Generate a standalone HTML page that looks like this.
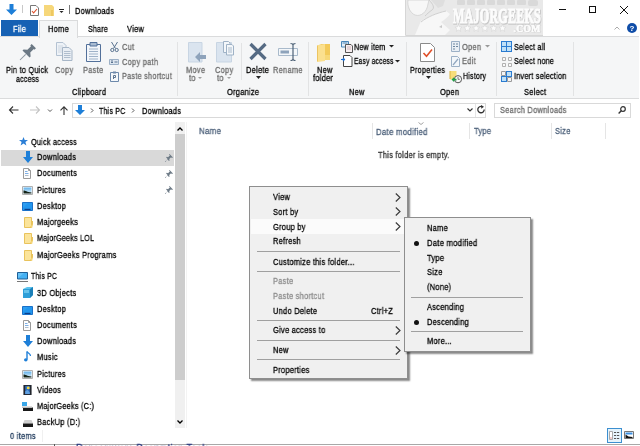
<!DOCTYPE html>
<html><head><meta charset="utf-8">
<style>
*{margin:0;padding:0;box-sizing:border-box}
html,body{width:640px;height:446px;overflow:hidden;background:#fff}
body{position:relative;font-family:"Liberation Sans",sans-serif;font-size:9px;color:#000;letter-spacing:0.3px;-webkit-text-stroke:0.3px currentColor}
.a{transform:scaleX(0.83);transform-origin:0 0;will-change:transform}
.a{position:absolute;white-space:nowrap;line-height:10px}
svg{position:absolute;overflow:visible}
.g{color:#6d6d6d}
.hl{position:absolute}
</style></head><body>

<!-- ===== TITLE BAR ===== -->
<svg style="left:6px;top:4px" width="11" height="11" viewBox="0 0 11 11"><path d="M3.5 0h4v5.5h3.5L5.5 11 0 5.5h3.5z" fill="#1e7fd8"/></svg>
<div class="hl" style="left:22px;top:5px;width:1px;height:8px;background:#c8c8c8"></div>
<svg style="left:30px;top:5px" width="9" height="11" viewBox="0 0 9 11"><path d="M0.5 0.5h5.5l2.5 2.5v7.5h-8z" fill="#fff" stroke="#777" stroke-width="1"/><path d="M2 6l1.6 1.8L7 4" fill="none" stroke="#e0502a" stroke-width="1.1"/></svg>
<svg style="left:44px;top:5px" width="10" height="11" viewBox="0 0 10 11"><path d="M0 0h8l2 2v9H0z" fill="#f6d77a"/><path d="M8 5v6" stroke="#e5b94a"/></svg>
<svg style="left:59px;top:9px" width="5" height="4" viewBox="0 0 5 4"><path d="M0 0.5h5" stroke="#222"/><path d="M0.5 2h4l-2 2z" fill="#222"/></svg>
<div class="hl" style="left:69px;top:5px;width:1px;height:9px;background:#777"></div>
<div class="a" style="left:75px;top:6px">Downloads</div>

<!-- watermark -->
<svg style="left:405px;top:0px;will-change:transform" width="139" height="36" viewBox="0 0 139 36">
<rect x="0" y="0" width="138" height="35" fill="#e9e9e9"/>
<path d="M0.5 0V35.5H138" fill="none" stroke="#d6d6d6"/>
<g fill="#d9d9d9"><rect x="52" y="0" width="8" height="5" rx="1"/><rect x="62" y="0" width="8" height="5" rx="1"/><rect x="72" y="0" width="8" height="5" rx="1"/><rect x="82" y="0" width="8" height="5" rx="1"/><rect x="92" y="0" width="8" height="5" rx="1"/><rect x="102" y="0" width="8" height="5" rx="1"/><rect x="112" y="0" width="9" height="5" rx="1"/><rect x="123" y="0" width="10" height="6" rx="2"/></g>
<path d="M3 0C2 6 5 13 10 15C16 17 22 12 23 4L24 0Z" fill="#f7f7f7" stroke="#d0d0d0" stroke-width="0.8"/>
<path d="M24 0C28 4 30 8 27 10C24 12 22 14 20 16" fill="none" stroke="#cfcfcf" stroke-width="1"/>
<path d="M16 21C22 17 32 13 41 11L45 14C42 18 39 20 36 22L45 30L40 35H10Z" fill="#f7f7f7"/>
<path d="M16 22C22 17 32 13 41 11" fill="none" stroke="#d0d0d0" stroke-width="1"/>
<path d="M26 0L33 8L38 6L40 0Z" fill="#dedede"/>
<path d="M34 27l3 -2v3z" fill="#c8c8c8"/>
<text x="48.6" y="24" font-family="Liberation Serif" font-weight="bold" font-size="22" textLength="88" lengthAdjust="spacingAndGlyphs" fill="#c9c9c9" stroke="#c9c9c9" stroke-width="1.6">MAJORGEEKS</text>
<text x="48" y="23.4" font-family="Liberation Serif" font-weight="bold" font-size="22" textLength="88" lengthAdjust="spacingAndGlyphs" fill="#fcfcfc" stroke="#fcfcfc" stroke-width="1.1">MAJORGEEKS</text>
<g fill="#fbfbfb" stroke="#d0d0d0" stroke-width="0.5">
<polygon points="53.50,24.50 54.51,26.92 57.11,27.13 55.13,28.83 55.73,31.37 53.50,30.01 51.27,31.37 51.87,28.83 49.89,27.13 52.49,26.92"/><polygon points="62.30,24.50 63.31,26.92 65.91,27.13 63.93,28.83 64.53,31.37 62.30,30.01 60.07,31.37 60.67,28.83 58.69,27.13 61.29,26.92"/><polygon points="71.10,24.50 72.11,26.92 74.71,27.13 72.73,28.83 73.33,31.37 71.10,30.01 68.87,31.37 69.47,28.83 67.49,27.13 70.09,26.92"/><polygon points="79.90,24.50 80.91,26.92 83.51,27.13 81.53,28.83 82.13,31.37 79.90,30.01 77.67,31.37 78.27,28.83 76.29,27.13 78.89,26.92"/><polygon points="88.70,24.50 89.71,26.92 92.31,27.13 90.33,28.83 90.93,31.37 88.70,30.01 86.47,31.37 87.07,28.83 85.09,27.13 87.69,26.92"/><polygon points="97.50,24.50 98.51,26.92 101.11,27.13 99.13,28.83 99.73,31.37 97.50,30.01 95.27,31.37 95.87,28.83 93.89,27.13 96.49,26.92"/></g>
<text x="109" y="32.4" font-family="Liberation Serif" font-weight="bold" font-size="11" textLength="27" lengthAdjust="spacingAndGlyphs" fill="#c9c9c9" stroke="#c9c9c9" stroke-width="1.2">.COM</text>
<text x="108.6" y="32" font-family="Liberation Serif" font-weight="bold" font-size="11" textLength="27" lengthAdjust="spacingAndGlyphs" fill="#fcfcfc" stroke="#fcfcfc" stroke-width="0.7">.COM</text>
</svg>

<!-- window controls -->
<div class="hl" style="left:559px;top:9px;width:7px;height:1px;background:#111"></div>
<div class="hl" style="left:589px;top:6px;width:7px;height:7px;border:1px solid #111"></div>
<svg style="left:620px;top:6px" width="8" height="8" viewBox="0 0 8 8"><path d="M0 0L8 8M8 0L0 8" stroke="#111" stroke-width="1"/></svg>

<!-- ===== TABS ===== -->
<div class="hl" style="left:1px;top:20px;width:37px;height:16px;background:#1661b4"></div>
<div class="a" style="left:13px;top:24px;color:#fff">File</div>
<div class="hl" style="left:39px;top:20px;width:39px;height:17px;background:#f5f6f7;border:1px solid #dadbdc;border-bottom:none"></div>
<div class="a" style="left:48px;top:24px">Home</div>
<div class="a" style="left:88px;top:24px;transform:scaleX(0.78)">Share</div>
<div class="a" style="left:127px;top:24px">View</div>
<svg style="left:614px;top:26px" width="6" height="4" viewBox="0 0 6 4"><path d="M0.5 3.5L3 1l2.5 2.5" fill="none" stroke="#aaa" stroke-width="1"/></svg>
<svg style="left:627px;top:23px;will-change:transform" width="10" height="10" viewBox="0 0 10 10"><circle cx="5" cy="5" r="5" fill="#0f4da8"/><text x="5" y="8" font-size="8" font-weight="bold" fill="#fff" text-anchor="middle" font-family="Liberation Sans">?</text></svg>

<!-- ===== RIBBON ===== -->
<div class="hl" style="left:0;top:36px;width:639px;height:63px;background:#f5f6f7;border-top:1px solid #dadbdc;border-bottom:1px solid #dadbdc"></div>
<div class="hl" style="left:39px;top:36px;width:39px;height:2px;background:#f5f6f7;border-left:1px solid #dadbdc;border-right:1px solid #dadbdc"></div>


<!-- Clipboard group -->
<svg style="left:19px;top:45px" width="16" height="16" viewBox="0 0 16 16"><g transform="translate(9.5 6.5) rotate(45)"><path d="M-3 -7.5h6v2h-1v5l3 2.5v1.5h-10v-1.5l3-2.5v-5h-1z" fill="#6b7884"/><path d="M-0.5 4h1v8h-1z" fill="#8a949e"/></g></svg>
<div class="a" style="left:6px;top:65px;transform:scaleX(0.811)">Pin to Quick</div>
<div class="a" style="left:16px;top:74px;transform:scaleX(0.775)">access</div>
<svg style="left:56px;top:42px" width="17" height="19" viewBox="0 0 17 19"><path d="M0.5 0.5h6.5l3 3v10h-9.5z" fill="#eef2f7" stroke="#b4c2d2"/><path d="M2 4h5M2 6h6M2 8h6M2 10h6" stroke="#c5d0dc" stroke-width="0.8"/><path d="M6.5 5.5h6.5l3 3v10h-9.5z" fill="#e9eef4" stroke="#a7b6c7"/><path d="M8 9.5h6.5M8 11.5h6.5M8 13.5h6.5M8 15.5h6.5" stroke="#a9b8c9" stroke-width="0.9"/></svg>
<div class="a g" style="left:55px;top:65px">Copy</div>
<svg style="left:86px;top:42px" width="15" height="20" viewBox="0 0 15 20"><path d="M0.5 2.5h14v17h-14z" fill="#f3f6fa" stroke="#52709a"/><path d="M4 0.5h7v3.5H4z" fill="#a9bcd2" stroke="#52709a"/><path d="M3 7h9M3 9.5h9M3 12h9M3 14.5h9M3 17h9" stroke="#9fb2c8"/></svg>
<div class="a g" style="left:83px;top:65px">Paste</div>
<svg style="left:110px;top:42px" width="9" height="10" viewBox="0 0 9 10"><path d="M1.5 0L5.5 6.5M7.5 0L3.5 6.5" stroke="#5a7390" stroke-width="1"/><circle cx="2.3" cy="8" r="1.6" fill="none" stroke="#5a7390"/><circle cx="6.7" cy="8" r="1.6" fill="none" stroke="#5a7390"/></svg>
<div class="a g" style="left:122px;top:42px">Cut</div>
<svg style="left:109px;top:59px" width="10" height="6" viewBox="0 0 10 6"><path d="M0.5 0.5h9v5h-9z" fill="#dde6f0" stroke="#9cb0c6"/><path d="M2 2h2M2 3.5h2M5.5 3h3" stroke="#5a7390"/></svg>
<div class="a g" style="left:122px;top:57px">Copy path</div>
<svg style="left:110px;top:71px" width="9" height="11" viewBox="0 0 9 11"><path d="M0.5 1.5h8v9h-8z" fill="#f5f8fb" stroke="#6d89ab"/><path d="M3 0.5h3v2h-3z" fill="#6d89ab"/><path d="M3.5 8V4.5h2v2h-2" fill="none" stroke="#5a7390"/></svg>
<div class="a g" style="left:122px;top:71px;transform:scaleX(0.81)">Paste shortcut</div>
<div class="a" style="left:72px;top:87px">Clipboard</div>
<div class="hl" style="left:177px;top:42px;width:1px;height:54px;background:#e2e3e4"></div>

<!-- Organize group -->
<svg style="left:188px;top:42px" width="19" height="21" viewBox="0 0 19 21"><path d="M0.5 0.5h13.5v19.5H0.5z" fill="#dae4ef" stroke="#c8d5e3"/><path d="M7 15l5-5v3h6v4h-6v3z" fill="#8ea3bb"/></svg>
<div class="a g" style="left:186px;top:65px">Move</div>
<div class="a g" style="left:189px;top:73px">to</div><svg style="left:198px;top:77px" width="4" height="2" viewBox="0 0 4 2"><path d="M0 0h4L2 2z" fill="#a0a0a0"/></svg>
<svg style="left:216px;top:40px" width="19" height="23" viewBox="0 0 19 23"><path d="M0.5 2.5h15v19.5H0.5z" fill="#dae4ef" stroke="#c8d5e3"/><path d="M7.5 1.5h5l1.5 1.5v9.5h-6.5z" fill="#f4f7fa" stroke="#9fb2c6"/><path d="M10.5 4.5h5.5l1.5 1.5v9h-7z" fill="#f4f7fa" stroke="#9fb2c6"/><path d="M12 8h4M12 10h4M12 12h4" stroke="#a9bacb"/></svg>
<div class="a g" style="left:215px;top:65px">Copy</div>
<div class="a g" style="left:217px;top:73px">to</div><svg style="left:227px;top:77px" width="4" height="2" viewBox="0 0 4 2"><path d="M0 0h4L2 2z" fill="#a0a0a0"/></svg>
<div class="hl" style="left:241px;top:43px;width:1px;height:37px;background:#e2e3e4"></div>
<svg style="left:249px;top:43px" width="18" height="17" viewBox="0 0 18 17"><path d="M1.5 1L16.5 16M16.5 1L1.5 16" stroke="#566b84" stroke-width="3.2"/></svg>
<div class="a" style="left:246px;top:65px">Delete</div>
<svg style="left:256px;top:76px" width="5" height="3" viewBox="0 0 5 3"><path d="M0 0h5L2.5 3z" fill="#222"/></svg>
<svg style="left:278px;top:43px" width="21" height="19" viewBox="0 0 21 19"><path d="M0.5 5.5h19v7h-19z" fill="#f4f7fa" stroke="#a9bacb"/><path d="M2.5 7.5h8.5v3H2.5z" fill="#8ea3bb"/><path d="M12.5 0.5c1.5 0 2.5 .5 2.5 1.5 0-1 1-1.5 2.5-1.5M12.5 17.5c1.5 0 2.5-.5 2.5-1.5 0 1 1 1.5 2.5 1.5M15 2v14" fill="none" stroke="#4f6378" stroke-width="1.2"/></svg>
<div class="a g" style="left:273px;top:65px">Rename</div>
<div class="a" style="left:227px;top:87px">Organize</div>
<div class="hl" style="left:308px;top:42px;width:1px;height:54px;background:#e2e3e4"></div>

<!-- New group -->
<svg style="left:317px;top:43px" width="14" height="19" viewBox="0 0 14 19"><path d="M4 1h9v16H4z" fill="#f3ca5a"/><path d="M0.5 2.5L4 1v16l-3.5 1.5z" fill="#f7d878"/><path d="M0.5 2.5l7.5-1.5v17l-7.5 1z" fill="#fbe08f"/><path d="M8 12h5v5H8z" fill="#f7d878"/><path d="M0.5 2.5v16" stroke="#e8bd50" stroke-width="0.8"/></svg>
<div class="a" style="left:317px;top:65px">New</div>
<div class="a" style="left:313px;top:73px">folder</div>
<svg style="left:341px;top:41px" width="12" height="12" viewBox="0 0 12 12"><path d="M0.5 0.5h7v5.5h-7z" fill="#e3eef8" stroke="#4a86b8"/><path d="M1.5 1.5h5v1h-5z" fill="#4a86b8"/><path d="M4.5 3.5h5.5l1.5 1.5v6.5h-7z" fill="#f7eef0" stroke="#555"/><path d="M6 6h4M6 8h4" stroke="#c9a9b0" stroke-width="0.8"/></svg>
<div class="a" style="left:354px;top:42px;transform:scaleX(0.79)">New item</div><svg style="left:389px;top:45px" width="5" height="3" viewBox="0 0 5 3"><path d="M0 0h5L2.5 2.5z" fill="#222"/></svg>
<svg style="left:341px;top:55px" width="12" height="12" viewBox="0 0 12 12"><path d="M2.5 0.5h6.5l2 2v9h-8.5z" fill="#fff" stroke="#444"/><path d="M0 4.5h3.5M2 3l1.5 1.5L2 6" fill="none" stroke="#1e6fd0" stroke-width="1.1"/></svg>
<div class="a" style="left:354px;top:56px;transform:scaleX(0.735)">Easy access</div><svg style="left:395px;top:60px" width="5" height="3" viewBox="0 0 5 3"><path d="M0 0h5L2.5 2.5z" fill="#222"/></svg>
<div class="a" style="left:349px;top:87px">New</div>
<div class="hl" style="left:406px;top:42px;width:1px;height:54px;background:#e2e3e4"></div>

<!-- Open group -->
<svg style="left:420px;top:43px" width="15" height="19" viewBox="0 0 15 19"><path d="M0.5 0.5h10l4 4v14h-14z" fill="#fff" stroke="#8a8a8a"/><path d="M3.5 10l3 3.2L12 6.5" fill="none" stroke="#e0502a" stroke-width="1.6"/></svg>
<div class="a" style="left:410px;top:65px;transform:scaleX(0.8)">Properties</div>
<svg style="left:426px;top:76px" width="5" height="3" viewBox="0 0 5 3"><path d="M0 0h5L2.5 3z" fill="#222"/></svg>
<svg style="left:451px;top:41px" width="9" height="11" viewBox="0 0 9 11"><path d="M0.5 0.5h8v10h-8z" fill="#e8eef5" stroke="#9cb0c6"/><path d="M2 3h2M2 5.5h2M2 8h2M5 3h2M5 5.5h2" stroke="#6f879f"/></svg>
<div class="a g" style="left:462px;top:42px">Open</div><svg style="left:485px;top:45px" width="5" height="3" viewBox="0 0 5 3"><path d="M0 0h5L2.5 2.5z" fill="#999"/></svg>
<svg style="left:451px;top:56px" width="9" height="11" viewBox="0 0 9 11"><path d="M0.5 0.5h6l2 2v8h-8z" fill="#f2f6fa" stroke="#9cb0c6"/><path d="M2 9l5-6" stroke="#8fa6bf" stroke-width="1.2"/></svg>
<div class="a g" style="left:462px;top:56px">Edit</div>
<svg style="left:450px;top:71px" width="13" height="13" viewBox="0 0 13 13"><path d="M0 0h6.5v8.5H0z" fill="#f7dd7a"/><path d="M0 0v8" stroke="#d9b440"/><circle cx="8" cy="8.2" r="3.6" fill="#fafafa" stroke="#555" stroke-width="1"/><path d="M8 6v2.3h1.8" fill="none" stroke="#555" stroke-width="0.8"/><path d="M1.5 8.5l2.5-2.3v1.5h2.5v1.8H4v1.5z" fill="#22a04a"/></svg>
<div class="a" style="left:463px;top:71px;transform:scaleX(0.773)">History</div>
<div class="a" style="left:440px;top:87px">Open</div>
<div class="hl" style="left:496px;top:42px;width:1px;height:54px;background:#e2e3e4"></div>

<!-- Select group -->
<svg style="left:501px;top:41px" width="11" height="11" viewBox="0 0 11 11"><path d="M0 0h11v11H0z" fill="#2a7bd0"/><path d="M1 1h4v4H1zM6 1h4v4H6zM1 6h4v4H1zM6 6h4v4H6z" fill="#bfe0f7"/></svg>
<div class="a" style="left:514px;top:42px;transform:scaleX(0.79)">Select all</div>
<svg style="left:502px;top:57px" width="10" height="10" viewBox="0 0 10 10"><path d="M0.5 0.5h3v3h-3zM6.5 0.5h3v3h-3zM0.5 6.5h3v3h-3zM6.5 6.5h3v3h-3z" fill="#fafafa" stroke="#a8a8a8" stroke-width="0.9"/></svg>
<div class="a" style="left:514px;top:56px;transform:scaleX(0.787)">Select none</div>
<svg style="left:501px;top:71px" width="11" height="11" viewBox="0 0 11 11"><path d="M0.5 0.5h4v4h-4zM6.5 6.5h4v4h-4z" fill="none" stroke="#9a9a9a"/><path d="M5 0h6v6H5zM0 5h6v6H0z" fill="#2a7bd0"/><path d="M6 1h4v4H6zM1 6h4v4H1z" fill="#bfe0f7"/></svg>
<div class="a" style="left:514px;top:71px;transform:scaleX(0.804)">Invert selection</div>
<div class="a" style="left:524px;top:87px">Select</div>
<div class="hl" style="left:573px;top:42px;width:1px;height:54px;background:#e2e3e4"></div>


<!-- ===== ADDRESS BAR ===== -->
<svg style="left:9px;top:106px" width="10" height="8" viewBox="0 0 10 8"><path d="M0.5 4h9M4 0.5L0.5 4 4 7.5" fill="none" stroke="#333" stroke-width="1.1"/></svg>
<svg style="left:30px;top:106px" width="10" height="8" viewBox="0 0 10 8"><path d="M0 4h9.5M6 0.5L9.5 4 6 7.5" fill="none" stroke="#c4c4c4" stroke-width="1.1"/></svg>
<svg style="left:48px;top:109px" width="4" height="3" viewBox="0 0 4 3"><path d="M0 0.5l2 2 2-2" fill="none" stroke="#555" stroke-width="1"/></svg>
<svg style="left:60px;top:106px" width="8" height="9" viewBox="0 0 8 9"><path d="M4 9V0.8M0.5 4.3L4 0.8l3.5 3.5" fill="none" stroke="#333" stroke-width="1.1"/></svg>
<div class="hl" style="left:72px;top:103px;width:414px;height:15px;border:1px solid #d9d9d9;background:#fff"></div>
<svg style="left:75px;top:105px" width="10" height="10" viewBox="0 0 10 10"><path d="M3 0h4v5h3L5 10 0 5h3z" fill="#1e7fd8"/></svg>
<svg style="left:90px;top:108px" width="4" height="5" viewBox="0 0 4 5"><path d="M1 0.5l2 2-2 2" fill="none" stroke="#555" stroke-width="1"/></svg>
<div class="a" style="left:99px;top:106px;transform:scaleX(0.777)">This PC</div>
<svg style="left:131px;top:108px" width="4" height="5" viewBox="0 0 4 5"><path d="M1 0.5l2 2-2 2" fill="none" stroke="#555" stroke-width="1"/></svg>
<div class="a" style="left:142px;top:106px">Downloads</div>
<svg style="left:467px;top:108px" width="6" height="4" viewBox="0 0 6 4"><path d="M0.5 0.5L3 3l2.5-2.5" fill="none" stroke="#333" stroke-width="1.1"/></svg>
<div class="hl" style="left:475px;top:104px;width:1px;height:13px;background:#e5e5e5"></div>
<svg style="left:477px;top:105px" width="9" height="10" viewBox="0 0 9 10"><path d="M7.2 4.5A3.2 3.2 0 1 1 5.2 1.6" fill="none" stroke="#333" stroke-width="1.3"/><path d="M4 0l3 1.8L4.3 3.8z" fill="#333"/></svg>
<div class="hl" style="left:494px;top:103px;width:137px;height:15px;border:1px solid #d9d9d9;background:#fff"></div>
<div class="a" style="left:500px;top:105px;color:#6d6d6d">Search Downloads</div>
<svg style="left:618px;top:106px" width="8" height="8" viewBox="0 0 8 8"><circle cx="5" cy="3" r="2.3" fill="none" stroke="#333" stroke-width="1.2"/><path d="M3.3 4.7L0.6 7.4" stroke="#333" stroke-width="1.4"/></svg>

<!-- ===== NAV PANE ===== -->
<svg style="left:19px;top:137px" width="9" height="9" viewBox="0 0 9 9"><path d="M4.5 0l1.2 3h3.3L6.4 5l1 3.5-2.9-2-2.9 2 1-3.5L0 3h3.3z" fill="#2b7fd6"/></svg>
<div class="a" style="left:31px;top:137px;transform:scaleX(0.805)">Quick access</div>
<div class="hl" style="left:1px;top:150px;width:173px;height:16px;background:#d9d9d9"></div>
<svg style="left:23px;top:151px" width="10" height="12" viewBox="0 0 10 12"><path d="M3 0h4v6h3l-5 6-5-6h3z" fill="#1e7fd8"/></svg>
<div class="a" style="left:37px;top:152px">Downloads</div>
<svg style="left:23px;top:168px" width="8" height="11" viewBox="0 0 8 11"><path d="M0.5 0.5h5l2 2v8h-7z" fill="#fdfdfd" stroke="#9a9a9a"/><path d="M5.5 0.5v2h2" fill="none" stroke="#9a9a9a"/><path d="M2 3.5h2.5M2 5.5h3.5" stroke="#5b9be0" stroke-width="0.8"/><path d="M2 7.5h3.5" stroke="#9ab" stroke-width="0.8"/></svg>
<div class="a" style="left:37px;top:168px">Documents</div>
<svg style="left:22px;top:186px" width="11" height="9" viewBox="0 0 11 9"><defs><linearGradient id="sky" x1="0" y1="0" x2="0" y2="1"><stop offset="0" stop-color="#5fb0ea"/><stop offset="1" stop-color="#e6f3fb"/></linearGradient></defs><path d="M0.5 0.5h10v8h-10z" fill="#fff" stroke="#b0b0b0"/><path d="M1.5 1.5h8v6h-8z" fill="url(#sky)"/><path d="M1.5 4.5c2 0 3.5 1.5 8 2v1h-8z" fill="#142418"/></svg>
<div class="a" style="left:37px;top:185px">Pictures</div>
<svg style="left:22px;top:202px" width="11" height="9" viewBox="0 0 11 9"><path d="M0.5 0.5h10v8h-10z" fill="#2196ee" stroke="#1a70c8"/><path d="M1 1h5l-5 5z" fill="#3aa6f4" opacity="0.5"/><path d="M2.5 6.8h6v1.2h-6z" fill="#0b3f8a"/></svg>
<div class="a" style="left:37px;top:201px">Desktop</div>

<div class="hl" style="left:166px;top:155px;width:7px;height:7px"></div>
<svg style="left:24px;top:217px" width="9" height="11" viewBox="0 0 9 11"><path d="M0.5 0.5h7v10h-7z" fill="#fbe49b" stroke="#e9c35c"/><path d="M6 10.5l2.5-2.5V4" fill="none" stroke="#e9c35c"/><path d="M7 8.5l1.5-1.5v3.5H7z" fill="#f6d77a"/></svg><div class="a" style="left:37px;top:217px">Majorgeeks</div>
<svg style="left:24px;top:233px" width="9" height="11" viewBox="0 0 9 11"><path d="M0.5 0.5h7v10h-7z" fill="#fbe49b" stroke="#e9c35c"/><path d="M6 10.5l2.5-2.5V4" fill="none" stroke="#e9c35c"/><path d="M7 8.5l1.5-1.5v3.5H7z" fill="#f6d77a"/></svg><div class="a" style="left:37px;top:233px;transform:scaleX(0.793)">MajorGeeks LOL</div>
<svg style="left:24px;top:250px" width="9" height="11" viewBox="0 0 9 11"><path d="M0.5 0.5h7v10h-7z" fill="#fbe49b" stroke="#e9c35c"/><path d="M6 10.5l2.5-2.5V4" fill="none" stroke="#e9c35c"/><path d="M7 8.5l1.5-1.5v3.5H7z" fill="#f6d77a"/></svg><div class="a" style="left:37px;top:250px">MajorGeeks Programs</div>
<svg style="left:165px;top:154px" width="8" height="8" viewBox="0 0 7 7"><path d="M4 0l3 3-1 .5-.7-.7-1.6 1.6.3 1.2-.5.5-1.5-1.5L.5 7 0 6.5l2.5-2L1 3l.5-.5 1.2.3 1.6-1.6L3.5.5z" fill="#6d7a86"/></svg><svg style="left:165px;top:170px" width="8" height="8" viewBox="0 0 7 7"><path d="M4 0l3 3-1 .5-.7-.7-1.6 1.6.3 1.2-.5.5-1.5-1.5L.5 7 0 6.5l2.5-2L1 3l.5-.5 1.2.3 1.6-1.6L3.5.5z" fill="#6d7a86"/></svg><svg style="left:165px;top:186px" width="8" height="8" viewBox="0 0 7 7"><path d="M4 0l3 3-1 .5-.7-.7-1.6 1.6.3 1.2-.5.5-1.5-1.5L.5 7 0 6.5l2.5-2L1 3l.5-.5 1.2.3 1.6-1.6L3.5.5z" fill="#6d7a86"/></svg>
<svg style="left:17px;top:272px" width="11" height="10" viewBox="0 0 11 10"><path d="M0.5 0.5h10v6.5h-10z" fill="#45b0f2" stroke="#1f5f96"/><path d="M1 1h6l-6 5z" fill="#7fcdf8" opacity="0.6"/><path d="M0 9.5h11" stroke="#777" stroke-width="1"/></svg>
<div class="a" style="left:31px;top:271px;transform:scaleX(0.768)">This PC</div>
<svg style="left:23px;top:287px" width="10" height="11" viewBox="0 0 10 11"><path d="M0 2L4 0h6v8l-3 3H0z" fill="#5cc4ee"/><path d="M0 2h7v9H0z" fill="#2e9fd8"/><path d="M7 2l3-2v8l-3 3z" fill="#1b7fb8"/><path d="M1 3h5v3H1z" fill="#8fdcf8" opacity="0.6"/></svg>
<div class="a" style="left:37px;top:288px">3D Objects</div>
<svg style="left:22px;top:306px" width="11" height="9" viewBox="0 0 11 9"><path d="M0.5 0.5h10v8h-10z" fill="#2196ee" stroke="#1a70c8"/><path d="M1 1h5l-5 5z" fill="#3aa6f4" opacity="0.5"/><path d="M2.5 6.8h6v1.2h-6z" fill="#0b3f8a"/></svg>
<div class="a" style="left:37px;top:304px">Desktop</div>
<svg style="left:23px;top:320px" width="8" height="11" viewBox="0 0 8 11"><path d="M0.5 0.5h5l2 2v8h-7z" fill="#fdfdfd" stroke="#9a9a9a"/><path d="M5.5 0.5v2h2" fill="none" stroke="#9a9a9a"/><path d="M2 3.5h2.5M2 5.5h3.5" stroke="#5b9be0" stroke-width="0.8"/><path d="M2 7.5h3.5" stroke="#9ab" stroke-width="0.8"/></svg>
<div class="a" style="left:37px;top:320px">Documents</div>
<svg style="left:23px;top:335px" width="10" height="12" viewBox="0 0 10 12"><path d="M3 0h4v6h3l-5 6-5-6h3z" fill="#1e7fd8"/></svg>
<div class="a" style="left:37px;top:336px">Downloads</div>
<svg style="left:24px;top:351px" width="7" height="11" viewBox="0 0 7 11"><path d="M3 0.5v8" stroke="#1e7fd8" stroke-width="1.4"/><ellipse cx="1.8" cy="8.8" rx="1.8" ry="1.6" fill="#1e7fd8"/><path d="M3 0.5c1 2 3.5 2 3.5 4.5" fill="none" stroke="#1e7fd8" stroke-width="1.2"/></svg>
<div class="a" style="left:37px;top:352px">Music</div>
<svg style="left:22px;top:370px" width="11" height="9" viewBox="0 0 11 9"><defs><linearGradient id="sky" x1="0" y1="0" x2="0" y2="1"><stop offset="0" stop-color="#5fb0ea"/><stop offset="1" stop-color="#e6f3fb"/></linearGradient></defs><path d="M0.5 0.5h10v8h-10z" fill="#fff" stroke="#b0b0b0"/><path d="M1.5 1.5h8v6h-8z" fill="url(#sky)"/><path d="M1.5 4.5c2 0 3.5 1.5 8 2v1h-8z" fill="#142418"/></svg>
<div class="a" style="left:37px;top:369px">Pictures</div>
<svg style="left:23px;top:385px" width="9" height="10" viewBox="0 0 9 11"><path d="M0 0h9v11H0z" fill="#22262e"/><path d="M2 1h5v9H2z" fill="#2f6fc0"/><circle cx="5.3" cy="3.2" r="1.6" fill="#f2d640"/><path d="M2 7l2.5-1.5L7 8v2H2z" fill="#5fa0e0"/></svg>
<div class="a" style="left:37px;top:385px">Videos</div>
<svg style="left:22px;top:402px" width="11" height="9" viewBox="0 0 11 9"><path d="M0 0h5v4H0z" fill="#3aa7e8"/><path d="M1 5.5h10v3.5H1z" fill="#1a1a1a"/><path d="M0 4.5h10v1.5H0z" fill="#bdbdbd"/></svg>
<div class="a" style="left:37px;top:401px;transform:scaleX(0.811)">MajorGeeks (C:)</div>
<svg style="left:23px;top:420px" width="10" height="7" viewBox="0 0 10 7"><path d="M1.5 0h7l1.5 3.5H0z" fill="#d0d0d0"/><path d="M0 3.5h10V7H0z" fill="#1a1a1a"/></svg>
<div class="a" style="left:37px;top:417px">BackUp (D:)</div>

<!-- nav scrollbar -->
<div class="hl" style="left:175px;top:122px;width:10px;height:306px;background:#f0f0f0"></div>
<div class="hl" style="left:175px;top:134px;width:10px;height:246px;background:#cdcdcd"></div>
<svg style="left:177px;top:127px" width="6" height="4" viewBox="0 0 6 4"><path d="M0.5 3.5L3 1l2.5 2.5" fill="none" stroke="#000" stroke-width="1.3"/></svg>
<svg style="left:177px;top:420px" width="6" height="4" viewBox="0 0 6 4"><path d="M0.5 0.5L3 3l2.5-2.5" fill="none" stroke="#000" stroke-width="1.3"/></svg>
<div class="hl" style="left:186px;top:122px;width:1px;height:306px;background:#f3f3f3"></div>

<!-- ===== CONTENT ===== -->
<div class="a" style="left:199px;top:126px;color:#4c607a;transform:scaleX(0.88)">Name</div>
<div class="hl" style="left:372px;top:123px;width:1px;height:16px;background:#e5e5e5"></div>
<svg style="left:418px;top:122px" width="6" height="3" viewBox="0 0 6 3"><path d="M0.5 0.5L3 2.5l2.5-2" fill="none" stroke="#999" stroke-width="0.9"/></svg>
<div class="a" style="left:376px;top:127px;color:#4c607a;transform:scaleX(0.87)">Date modified</div>
<div class="hl" style="left:469px;top:123px;width:1px;height:16px;background:#e5e5e5"></div>
<div class="a" style="left:474px;top:126px;color:#4c607a">Type</div>
<div class="hl" style="left:551px;top:123px;width:1px;height:16px;background:#e5e5e5"></div>
<div class="a" style="left:555px;top:126px;color:#4c607a">Size</div>
<div class="hl" style="left:605px;top:123px;width:1px;height:16px;background:#e5e5e5"></div>
<div class="a" style="left:378px;top:150px;color:#333">This folder is empty.</div>

<!-- ===== STATUS BAR ===== -->
<div class="a" style="left:10px;top:431px;color:#1e395b">0 items</div>
<div class="hl" style="left:42px;top:430px;width:1px;height:12px;background:#f0f0f0"></div>
<div class="hl" style="left:607px;top:428px;width:15px;height:15px;border:1px solid #3c8fd0;background:#e5f3fb"></div>
<svg style="left:609px;top:431px" width="11" height="9" viewBox="0 0 11 9"><path d="M0.5 0.5h3v8h-3z" fill="#fff" stroke="#aaa"/><path d="M1.2 7h1.5" stroke="#e08080"/><path d="M5 1.5h2.2M8 1.5h2.2M5 4.5h2.2M8 4.5h2.2M5 7.5h2.2M8 7.5h2.2" stroke="#555" stroke-width="1"/></svg>
<svg style="left:624px;top:431px" width="10" height="8" viewBox="0 0 10 8"><path d="M0.5 0.5h9v7h-9z" fill="#fff" stroke="#777"/><path d="M1.5 1.5h7v2h-7z" fill="#3a8ee0"/><path d="M1.5 3.5l3 2 4 0.5v1h-7z" fill="#111"/></svg>
<div class="hl" style="left:0;top:444px;width:640px;height:1px;background:#a8a8a8"></div>
<div class="hl" style="left:54px;top:444px;width:1px;height:2px;background:#555"></div>
<div class="a" style="left:76px;top:444px;color:#2a3a80;font-size:10px;transform:scaleX(0.93)">Ransomware Decryption Tools</div>


<!-- ===== CONTEXT MENU ===== -->
<div class="hl" style="left:249px;top:186px;width:159px;height:193px;background:#f0f0f0;border:1px solid #8e8e8e;box-shadow:2px 2px 1.5px rgba(0,0,0,0.45)"></div>
<div class="hl" style="left:251px;top:219px;width:155px;height:15px;background:#fbfbfb"></div>
<div class="a" style="left:273px;top:192px">View</div>
<div class="a" style="left:273px;top:207px">Sort by</div>
<div class="a" style="left:273px;top:222px">Group by</div>
<div class="a" style="left:273px;top:236px">Refresh</div>
<div class="hl" style="left:257px;top:251px;width:143px;height:1px;background:#a0a0a0"></div>
<div class="a" style="left:273px;top:257px">Customize this folder...</div>
<div class="hl" style="left:257px;top:271px;width:143px;height:1px;background:#a0a0a0"></div>
<div class="a" style="left:273px;top:276px;color:#8d8d8d">Paste</div>
<div class="a" style="left:273px;top:291px;color:#8d8d8d">Paste shortcut</div>
<div class="a" style="left:273px;top:306px">Undo Delete</div>
<div class="a" style="left:371px;top:306px">Ctrl+Z</div>
<div class="hl" style="left:257px;top:320px;width:143px;height:1px;background:#a0a0a0"></div>
<div class="a" style="left:273px;top:325px">Give access to</div>
<div class="hl" style="left:257px;top:340px;width:143px;height:1px;background:#a0a0a0"></div>
<div class="a" style="left:273px;top:345px">New</div>
<div class="hl" style="left:257px;top:359px;width:143px;height:1px;background:#a0a0a0"></div>
<div class="a" style="left:273px;top:365px">Properties</div>
<svg style="left:395px;top:193px" width="6" height="9" viewBox="0 0 6 9"><path d="M0.8 0.5L5 4.5 0.8 8.5" fill="none" stroke="#3a3a3a" stroke-width="1.15"/></svg>
<svg style="left:395px;top:207px" width="6" height="9" viewBox="0 0 6 9"><path d="M0.8 0.5L5 4.5 0.8 8.5" fill="none" stroke="#3a3a3a" stroke-width="1.15"/></svg>
<svg style="left:395px;top:222px" width="6" height="9" viewBox="0 0 6 9"><path d="M0.8 0.5L5 4.5 0.8 8.5" fill="none" stroke="#3a3a3a" stroke-width="1.15"/></svg>
<svg style="left:395px;top:326px" width="6" height="9" viewBox="0 0 6 9"><path d="M0.8 0.5L5 4.5 0.8 8.5" fill="none" stroke="#3a3a3a" stroke-width="1.15"/></svg>
<svg style="left:395px;top:346px" width="6" height="9" viewBox="0 0 6 9"><path d="M0.8 0.5L5 4.5 0.8 8.5" fill="none" stroke="#3a3a3a" stroke-width="1.15"/></svg>

<!-- submenu -->
<div class="hl" style="left:404px;top:217px;width:127px;height:135px;background:#f0f0f0;border:1px solid #8e8e8e;box-shadow:2px 2px 1.5px rgba(0,0,0,0.45)"></div>
<div class="a" style="left:427px;top:223px">Name</div>
<div class="a" style="left:427px;top:238px;transform:scaleX(0.85)">Date modified</div>
<div class="a" style="left:427px;top:253px">Type</div>
<div class="a" style="left:427px;top:267px">Size</div>
<div class="a" style="left:427px;top:282px">(None)</div>
<div class="hl" style="left:411px;top:297px;width:112px;height:1px;background:#a0a0a0"></div>
<div class="a" style="left:427px;top:302px">Ascending</div>
<div class="a" style="left:427px;top:317px">Descending</div>
<div class="hl" style="left:411px;top:331px;width:112px;height:1px;background:#a0a0a0"></div>
<div class="a" style="left:427px;top:336px">More...</div>
<div class="hl" style="left:414px;top:241px;width:5px;height:5px;border-radius:50%;background:#111"></div>
<div class="hl" style="left:414px;top:320px;width:5px;height:5px;border-radius:50%;background:#111"></div>

</body></html>
